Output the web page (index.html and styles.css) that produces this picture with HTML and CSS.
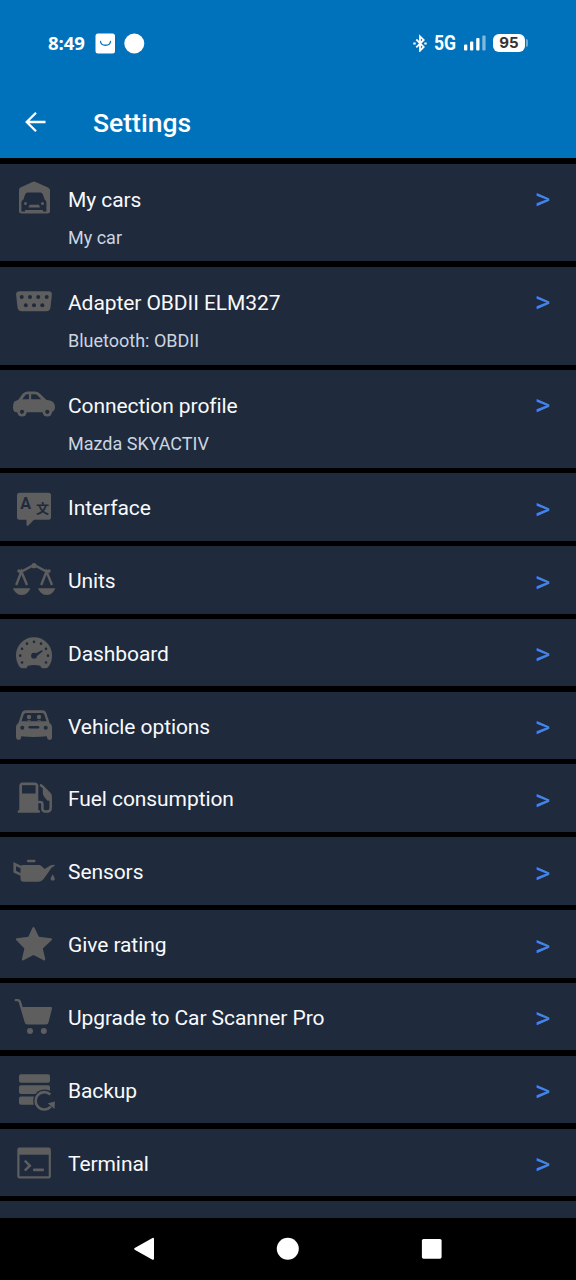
FILE: index.html
```html
<!DOCTYPE html>
<html lang="en">
<head>
<meta charset="utf-8">
<title>Settings</title>
<link rel="stylesheet" href="styles.css">
</head>
<body>
<div class="screen">
  <header class="header">
    <div class="status">
      <span class="clock">8:49</span>
      <svg class="status-left" viewBox="94 32 52 22" width="52" height="22"><rect x="95.500" y="33.500" width="19.500" height="20" rx="2.500" fill="#fff"/><path d="M100.500 41.500c.8 5 9.200 5 10 0" fill="none" stroke="#0072bc" stroke-width="1.300" stroke-linecap="round"/><circle cx="134.300" cy="43.500" r="10" fill="#fff"/></svg>
      <span class="spacer"></span>
      <svg class="bluetooth" viewBox="412 34 16 18" width="16" height="18"><path d="M416.300 39.500l7.400 7.400-3.700 3.800V36.300l3.700 3.600-7.400 7.400" fill="none" stroke="#fff" stroke-width="1.800"/><path d="M413.300 43.400h2.400M424.300 43.400h2.400" stroke="#fff" stroke-width="2"/></svg>
      <span class="network">5G</span>
      <svg class="signal" viewBox="463 34 24 18" width="24" height="18"><g fill="#fff"><rect x="464" y="44.500" width="3.300" height="6" rx="1"/><rect x="470" y="41.500" width="3.300" height="9" rx="1"/><rect x="476.200" y="38" width="3.300" height="12.500" rx="1"/><rect x="482.300" y="35.500" width="3.300" height="15" rx="1" opacity=".5"/></g></svg>
      <span class="battery">95</span><span class="battery-tip"></span>
    </div>
    <div class="titlebar">
      <svg viewBox="24 110 24 24" width="24" height="24"><path d="M45.500 122H27M36 112.700L26.700 122l9.300 9.300" fill="none" stroke="#fff" stroke-width="2.300"/></svg>
      <h1 class="title">Settings</h1>
    </div>
  </header>

  <main class="list">
    <div class="row tall">
      <svg class="icon" viewBox="12 175.500 44 44"><path d="M19 189.500q0-1.600 1.400-2.400l12-5.700q1.600-.7 3.200 0l12.400 5.700q2 1 2 2.600v21q0 2.300-2.300 2.300H21.300q-2.300 0-2.300-2.300z"/><path class="hole" d="M23.500 199l1.600-5q.7-2 2.600-2h12.600q2 0 2.600 2l1.700 5q1.800 1.200 1.800 3v9h-3.500v-1.500H25v1.500h-3.600v-9q0-1.800 2.100-3z"/><circle cx="25.500" cy="203" r="1.500"/><circle cx="42.500" cy="203" r="1.500"/><path d="M28.500 207l1-2.700h9.500l1 2.700z"/></svg>
      <div class="text"><div class="label">My cars</div><div class="sub">My car</div></div><span class="arrow">&gt;</span>
    </div>
    <div class="row tall">
      <svg class="icon" viewBox="12 278.750 44 44"><path d="M19.500 291h29q3.700 0 3.400 3.500l-1.400 12.500q-.5 4-4.200 4H21.700q-3.700 0-4.200-4l-1.400-12.500q-.3-3.500 3.400-3.500z"/><g class="hole"><circle cx="21.700" cy="296.700" r="2"/><circle cx="30" cy="296.700" r="2"/><circle cx="38.200" cy="296.700" r="2"/><circle cx="46.700" cy="296.700" r="2"/><circle cx="25.800" cy="304.900" r="2"/><circle cx="34" cy="304.900" r="2"/><circle cx="42.300" cy="304.900" r="2"/></g></svg>
      <div class="text"><div class="label">Adapter OBDII ELM327</div><div class="sub">Bluetooth: OBDII</div></div><span class="arrow">&gt;</span>
    </div>
    <div class="row tall">
      <svg class="icon" viewBox="12 382 44 44"><path d="M14.500 401.500l3.800-1.700 4.200-5.800q1.900-2.500 5-2.500h7.500q2.800 0 4.800 2l6.700 6.500q5 .2 7 2.500 1.500 1.700 1.500 5.500-1 4-4 4.200H16q-3-.8-3-4.200 0-5 1.500-6.500z"/><circle cx="22" cy="411.800" r="4.800"/><circle cx="47.300" cy="411.800" r="4.800"/><path class="hole" d="M22.300 399.300l2.800-3.800q.8-1.200 2.300-1.200h1.500v5zM31.200 394.300h3.600q1.700 0 2.800 1.200l3.600 3.800h-10z"/><g class="hole"><circle cx="22" cy="411.800" r="2.100"/><circle cx="47.300" cy="411.800" r="2.100"/></g></svg>
      <div class="text"><div class="label">Connection profile</div><div class="sub">Mazda SKYACTIV</div></div><span class="arrow">&gt;</span>
    </div>
    <div class="row">
      <svg class="icon" viewBox="12 485.250 44 44"><path d="M19.500 493h29q2.500 0 2.500 2.500v22q0 2.500-2.500 2.500H34l-5.600 5.800q-1.900 1.200-1.900-1V520h-7q-2.500 0-2.500-2.500v-22q0-2.500 2.500-2.500z"/><text class="hole latin" x="25.600" y="509.500" text-anchor="middle">A</text><text class="hole han" x="42.500" y="513.300" text-anchor="middle">文</text></svg>
      <div class="text"><div class="label">Interface</div></div><span class="arrow">&gt;</span>
    </div>
    <div class="row">
      <svg class="icon" viewBox="12 558 44 44"><g class="line" stroke-width="2.400"><path d="M18.500 571.500l4-.5 9-4.700h5l9 4.700 4 .5"/><path d="M16.200 585l5.200-13.500 5.600 13.500M41.200 585l5.300-13.500 5.500 13.500"/></g><circle cx="34" cy="565.700" r="2.600"/><circle cx="19" cy="571" r="1.700"/><circle cx="49" cy="571" r="1.700"/><path d="M13 588.200h17.300q-.5 2.300-2.600 4.200-2.300 2.600-6 2.600t-6-2.600q-2.200-1.900-2.700-4.200zM38 588.200h17.300q-.5 2.300-2.600 4.200-2.300 2.600-6 2.600t-6-2.600q-2.200-1.900-2.700-4.200z"/></svg>
      <div class="text"><div class="label">Units</div></div><span class="arrow">&gt;</span>
    </div>
    <div class="row">
      <svg class="icon" viewBox="12 630.850 44 44"><path d="M22.300 668h4l1.800-2.500q6-1.200 12 0l1.700 2.500h4.400q1.400 0 2.300-1.300A18.200 18.200 0 0 0 52 655a18 18 0 0 0-36 0q0 6.500 3.500 11.700.9 1.300 2.800 1.300z"/><g class="hole"><circle cx="34" cy="655.500" r="2.900"/><path d="M33.500 654.300l7.800-4q1.500-.5 1.200 1L35.500 657z"/><circle cx="20.200" cy="655.500" r="1.300"/><circle cx="22" cy="648.700" r="1.300"/><circle cx="27" cy="643.500" r="1.300"/><circle cx="34" cy="641.700" r="1.300"/><circle cx="41" cy="643.500" r="1.300"/><circle cx="46" cy="648.700" r="1.300"/><circle cx="48" cy="655.500" r="1.300"/><circle cx="46" cy="662.300" r="1.300"/><circle cx="22" cy="662.300" r="1.300"/></g></svg>
      <div class="text"><div class="label">Dashboard</div></div><span class="arrow">&gt;</span>
    </div>
    <div class="row">
      <svg class="icon" viewBox="12 703.700 44 44"><path d="M18.500 722.500l3-9.300q1-3.200 4.300-3.200h16.500q3.200 0 4.200 3.200l3 9.300q2.500 1.500 2.500 5v9.500q0 2.600-2.400 2.600t-2.700-2.600v-1q-13 1.500-25.700 0v1q-.2 2.600-2.600 2.600t-2.600-2.600v-9.500q0-3.500 2.500-5z"/><path class="hole" d="M21.500 721l2.200-6.700q.5-1.700 2-1.700h16.600q1.500 0 2 1.700l2.200 6.700z"/><circle cx="29" cy="716.700" r="2.200"/><circle cx="39" cy="716.700" r="2.200"/><path d="M26.700 721q.2-1 2.300-1t2.300 1zM36.700 721q.2-1 2.300-1t2.300 1z"/><g class="hole"><circle cx="22.300" cy="727.500" r="2"/><circle cx="45.700" cy="727.500" r="2"/><rect x="28.500" y="725.700" width="10.800" height="2.600" rx="1.300"/></g></svg>
      <div class="text"><div class="label">Vehicle options</div></div><span class="arrow">&gt;</span>
    </div>
    <div class="row">
      <svg class="icon" viewBox="12 776.500 44 44"><path d="M19.300 786.500q0-3.500 3.400-3.500h12.200q3.400 0 3.400 3.500v24.300h1q.7 0 .7 1v.7q0 .8-.8.800H18.500q-.8 0-.8-.8v-.7q0-1 .8-1h.8z"/><path class="hole" d="M22 785.700h13.600v8.300H22z"/><path class="line" stroke-width="2.500" d="M38 802.500h2.200q2.200 0 2.200 2.200v4.500q0 2.800 3.300 2.800h1.500q3.500 0 3.500-3.500V798q0-2.500-1.500-4.200l-6.500-6.600q-1.200-1.200-2.800-1.700"/><path d="M42.800 787.500l8.500 7v6.700h-3.800l-3.200-3.800q-1.500-1.800-1.500-4z"/></svg>
      <div class="text"><div class="label">Fuel consumption</div></div><span class="arrow">&gt;</span>
    </div>
    <div class="row">
      <svg class="icon" viewBox="12 849.300 44 44"><rect x="27" y="860" width="8.500" height="2.600" rx="1"/><path d="M20.500 867.500q0-2.200 2.300-2.200h16q1.500 0 2.600 1l3.300 2.900 5.200-3.100q2.200-1.100 4.300-1.100 1 .2.200 1.400l-2.600 1.400-8.200 11.500q-2 2.700-5 2.700H23.800q-3.300 0-3.300-3.300z"/><path class="line" stroke-width="2.600" d="M21 867.500l-6.300-3.200v7.700l6.300 3"/><path d="M52.700 874.500l1.700 3.200q.8 1.600.2 2.300-1.800 1.800-3.700 0-.7-.7.100-2.300z"/></svg>
      <div class="text"><div class="label">Sensors</div></div><span class="arrow">&gt;</span>
    </div>
    <div class="row">
      <svg class="icon" viewBox="12 922.100 44 44"><path d="M32.600 927.700q.9-1.400 1.800 0l4.500 9.200 12 1.500q2 .5.700 2l-8.800 8.200 2.500 10.600q0 2-1.700 1.200l-10.100-5.200-10 5.200q-1.800.7-1.600-1.200l2.500-10.600-8-8.200q-1.400-1.500.6-2l11.300-1.500z"/></svg>
      <div class="text"><div class="label">Give rating</div></div><span class="arrow">&gt;</span>
    </div>
    <div class="row">
      <svg class="icon" viewBox="12 994.900 44 44"><path d="M21.700 1007H51q1.300 0 1 1.300l-3.500 14.200q-.5 2-2.500 2H27.500q-1.500 0-2-1.700z"/><path class="line" stroke-width="2.400" stroke-linecap="round" d="M15.800 1000h2q1.400 0 1.900 1.300l6.300 21"/><circle cx="30" cy="1030.800" r="3"/><circle cx="43.800" cy="1030.800" r="3"/></svg>
      <div class="text"><div class="label">Upgrade to Car Scanner Pro</div></div><span class="arrow">&gt;</span>
    </div>
    <div class="row">
      <svg class="icon" viewBox="12 1067.700 44 44"><rect x="19" y="1074" width="31" height="8.500" rx="2"/><rect x="19" y="1085" width="31" height="8.800" rx="2"/><rect x="19" y="1096.300" width="20" height="8.200" rx="2"/><circle class="hole" cx="44.500" cy="1100.500" r="11.300"/><path class="line" stroke-width="2.600" d="M50.300 1094.200a8.700 8.700 0 1 0 .5 12.100"/><path d="M47.700 1103l7.300-1.800-.5 7.500z"/></svg>
      <div class="text"><div class="label">Backup</div></div><span class="arrow">&gt;</span>
    </div>
    <div class="row">
      <svg class="icon" viewBox="12 1140.500 44 44"><rect x="17.300" y="1147" width="33.600" height="31" rx="2.300"/><path class="hole" d="M19.500 1154.200h29.200v21.600H19.500z"/><path class="line" stroke-width="2.500" d="M24.800 1160.200l5 5-5 5"/><rect x="33" y="1168" width="11" height="2.700" rx=".8"/></svg>
      <div class="text"><div class="label">Terminal</div></div><span class="arrow">&gt;</span>
    </div>
    <div class="row"></div>
  </main>

  <nav class="navbar">
    <svg viewBox="132 1236 24 26" width="24" height="26"><path d="M135.200 1248.800l17.800-10v20z" fill="#fff" stroke="#fff" stroke-width="2" stroke-linejoin="round"/></svg>
    <svg viewBox="276 1236 24 26" width="24" height="26"><circle cx="287.800" cy="1248.800" r="11" fill="#fff"/></svg>
    <svg viewBox="420 1236 24 26" width="24" height="26"><rect x="421.900" y="1239" width="19.700" height="19.700" rx="1.600" fill="#fff"/></svg>
  </nav>
</div>
</body>
</html>
```
FILE: styles.css
```css
* { box-sizing: border-box; }
body {
  margin: 0;
  background: #000;
  font-family: Roboto, "Liberation Sans", sans-serif;
}
.screen {
  width: 576px;
  height: 1280px;
  display: flex;
  flex-direction: column;
  overflow: hidden;
}
.header {
  height: 158px;
  flex: none;
  background: #0072bc;
  color: #fff;
}
.status {
  height: 86px;
  display: flex;
  align-items: center;
  padding: 0 48px 0 48px;
}
.clock {
  width: 46px;
  font: 700 18.500px/22px "Open Sans", sans-serif;
  letter-spacing: -0.1px;
  white-space: nowrap;
}
.spacer { flex: 1; }
.network {
  width: 23px;
  margin: 0 6px;
  font: 700 20px/22px Roboto, sans-serif;
  transform: scaleX(.88);
  transform-origin: left;
}
.signal { margin-right: 6px; }
.battery {
  width: 32px;
  height: 18px;
  border-radius: 6px;
  background: #fff;
  color: #333;
  font: 700 15px/18px Inter, sans-serif;
  text-align: center;
}
.battery-tip {
  width: 2px;
  height: 8px;
  margin-left: 1px;
  border-radius: 0 2px 2px 0;
  background: #69aedb;
}
.titlebar {
  height: 72px;
  display: flex;
  align-items: center;
  padding: 0 24px;
}
.title {
  margin: 2px 0 0 45px;
  font-size: 26.500px;
  line-height: 32px;
  font-weight: 500;
}
.list {
  flex: none;
  height: 1059.500px;
  padding-top: 5.500px;
  display: flex;
  flex-direction: column;
  gap: 5.300px;
  overflow: hidden;
}
.row {
  flex: none;
  height: 67.530px;
  display: flex;
  padding: 0 25.500px 0 12px;
  background: #1f2a3c;
}
.row.tall { height: 97.950px; }
.icon {
  width: 44px;
  height: 44px;
  margin-top: 12px;
  fill: #5e5e5e;
}
.hole { fill: #1f2a3c; }
.line { fill: none; stroke: #5e5e5e; }
.latin { font: 700 16px Roboto, sans-serif; }
.han { font: 700 13px "Noto Sans CJK SC", sans-serif; }
.text {
  flex: 1;
  padding: 22px 0 0 12px;
}
.tall .text { padding-top: 23px; }
.label {
  font-size: 21px;
  line-height: 26px;
  letter-spacing: -0.08px;
  color: #f8fafc;
}
.sub {
  margin-top: 13px;
  font-size: 18px;
  line-height: 24px;
  color: #cbd5e1;
}
.arrow {
  margin-top: 19.500px;
  font-size: 30px;
  line-height: 32px;
  color: #4285ea;
}
.navbar {
  flex: 1;
  display: flex;
  justify-content: space-between;
  padding: 18.500px 132px 0;
}
```
